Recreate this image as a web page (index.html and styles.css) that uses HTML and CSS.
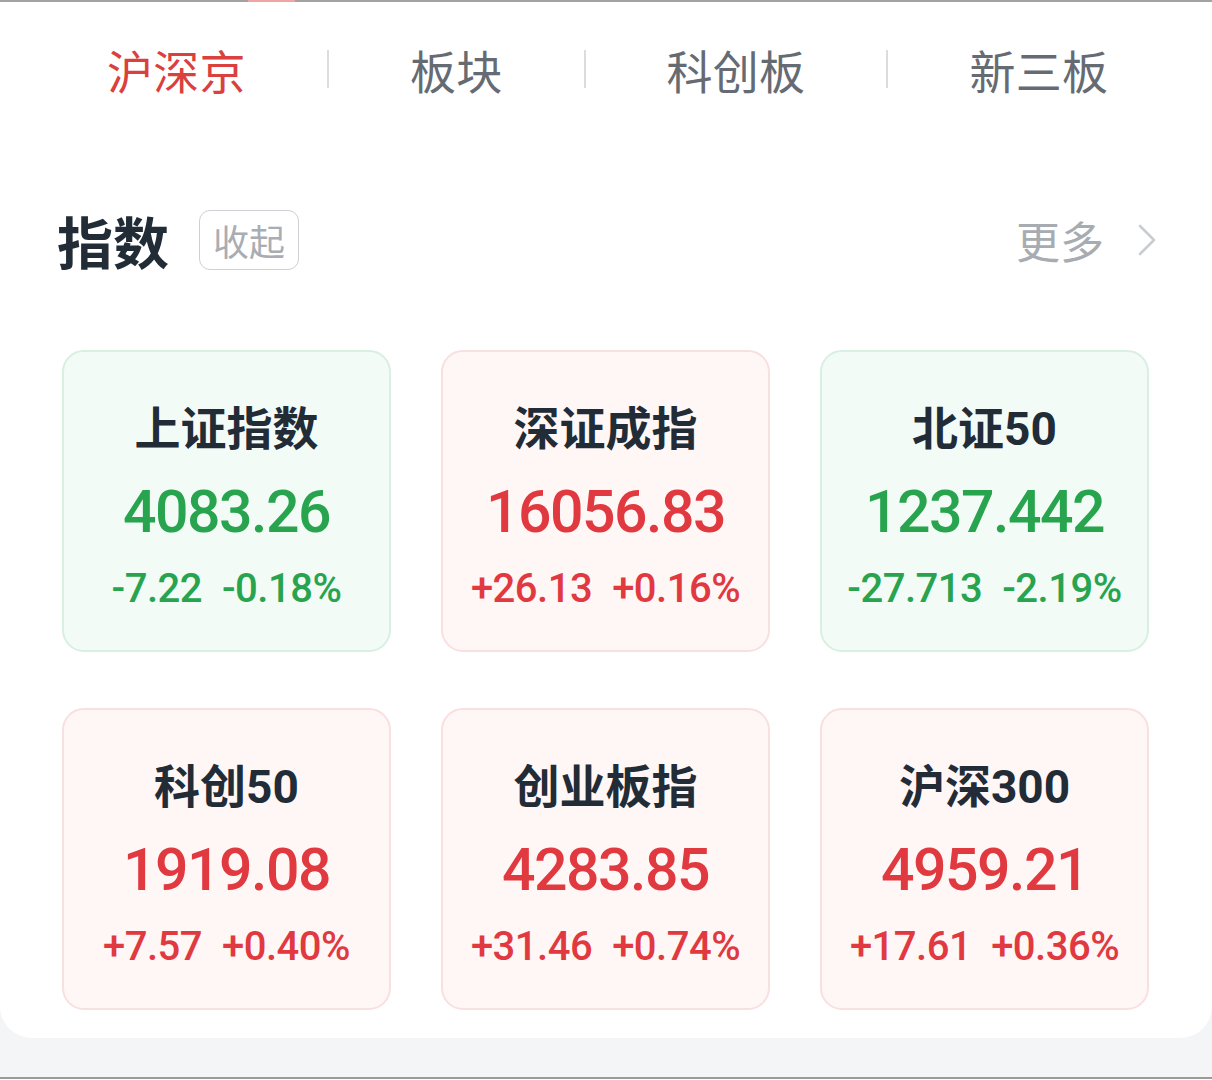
FILE: index.html
```html
<!DOCTYPE html>
<html lang="zh-CN">
<head>
  <meta charset="UTF-8">
  <title>行情 - 指数</title>
  <link rel="stylesheet" href="styles.css">
</head>
<body>
  <div class="top-strip"><span class="top-mark"></span></div>

  <div class="panel">
    <nav class="tabs">
      <span class="tab active">沪深京</span>
      <span class="tab-sep"></span>
      <span class="tab">板块</span>
      <span class="tab-sep"></span>
      <span class="tab">科创板</span>
      <span class="tab-sep"></span>
      <span class="tab">新三板</span>
    </nav>

    <div class="section-head">
      <h2>指数</h2>
      <button class="fold-btn" type="button">收起</button>
      <a class="more" href="#">更多
        <svg class="chevron" width="18" height="32" viewBox="0 0 18 32" aria-hidden="true">
          <path d="M2 2 L16 16 L2 30" fill="none" stroke="#c9cdd2" stroke-width="2.6" stroke-linecap="round" stroke-linejoin="round"/>
        </svg>
      </a>
    </div>

    <div class="index-grid">
      <div class="index-card down">
        <div class="name">上证指数</div>
        <div class="price">4083.26</div>
        <div class="change"><span>-7.22</span><span>-0.18%</span></div>
      </div>
      <div class="index-card up">
        <div class="name">深证成指</div>
        <div class="price">16056.83</div>
        <div class="change"><span>+26.13</span><span>+0.16%</span></div>
      </div>
      <div class="index-card down">
        <div class="name">北证50</div>
        <div class="price">1237.442</div>
        <div class="change"><span>-27.713</span><span>-2.19%</span></div>
      </div>
      <div class="index-card up">
        <div class="name">科创50</div>
        <div class="price">1919.08</div>
        <div class="change"><span>+7.57</span><span>+0.40%</span></div>
      </div>
      <div class="index-card up">
        <div class="name">创业板指</div>
        <div class="price">4283.85</div>
        <div class="change"><span>+31.46</span><span>+0.74%</span></div>
      </div>
      <div class="index-card up">
        <div class="name">沪深300</div>
        <div class="price">4959.21</div>
        <div class="change"><span>+17.61</span><span>+0.36%</span></div>
      </div>
    </div>
  </div>

  <div class="next-panel"></div>
</body>
</html>
```

FILE: styles.css
```css
body {
  margin: 0;
  background-color: #f4f5f7;
  font-family: Roboto, "Noto Sans CJK SC", sans-serif;
  overflow: hidden;
}

.top-strip {
  display: flex;
  height: 2px;
  background-color: #a3a3a3;
}

.top-mark {
  width: 47px;
  margin-left: 248px;
  background-color: #f0a4a4;
}

.panel {
  background-color: #fff;
  border-radius: 0 0 32px 32px;
  padding-bottom: 28px;
}

/* tab bar */
.tabs {
  display: flex;
  align-items: center;
  gap: 81px;
  padding: 37px 0 0 107px;
  height: 60px;
}

.tab {
  font-family: "Noto Sans CJK SC", sans-serif;
  font-size: 46px;
  letter-spacing: 0.3px;
  line-height: 60px;
  color: #666b73;
}

.tab.active {
  color: #d9403e;
}

.tab-sep {
  width: 2px;
  height: 38px;
  background-color: #dcdcdc;
}

/* section header */
.section-head {
  display: flex;
  align-items: center;
  margin-top: 106px;
  padding: 0 56px 0 57px;
  height: 70px;
}

.section-head h2 {
  margin: 0;
  font-family: "Noto Sans CJK SC", sans-serif;
  font-size: 56px;
  font-weight: bold;
  line-height: 70px;
  color: #222c36;
}

.fold-btn {
  margin-left: 30px;
  height: 60px;
  padding: 0 13px;
  border: 1.5px solid #cdd0d4;
  border-radius: 11px;
  background: #fff;
  font-family: "Noto Sans CJK SC", sans-serif;
  font-size: 36px;
  color: #a9adb3;
  line-height: 56px;
}

.more {
  margin-left: auto;
  display: flex;
  align-items: center;
  gap: 34px;
  font-family: "Noto Sans CJK SC", sans-serif;
  font-size: 44px;
  color: #a7acb2;
  text-decoration: none;
}

/* index cards */
.index-grid {
  display: grid;
  grid-template-columns: repeat(3, 329px);
  column-gap: 50px;
  row-gap: 56px;
  margin-top: 75px;
  padding-left: 62px;
}

.index-card {
  box-sizing: border-box;
  height: 302px;
  border-radius: 22px;
  border: 2px solid;
  text-align: center;
  padding-top: 49px;
}

.index-card.down {
  background-color: #f3fbf6;
  border-color: #d8efe1;
  color: #28a44f;
}

.index-card.up {
  background-color: #fff6f6;
  border-color: #f8e0e0;
  color: #e13940;
}

.name {
  font-family: Roboto, "Noto Sans CJK SC", sans-serif;
  font-size: 46px;
  font-weight: bold;
  line-height: 56px;
  color: #222c36;
}

.price {
  margin-top: 20px;
  font-size: 59px;
  font-weight: 500;
  line-height: 70px;
  letter-spacing: -1.5px;
}

.change {
  display: flex;
  justify-content: center;
  gap: 20px;
  margin-top: 18px;
  font-size: 40px;
  font-weight: 500;
  line-height: 48px;
  letter-spacing: -0.5px;
}

.next-panel {
  margin-top: 39px;
  height: 40px;
  border-top: 2px solid #9a9a9a;
  background-color: #fff;
}
```
